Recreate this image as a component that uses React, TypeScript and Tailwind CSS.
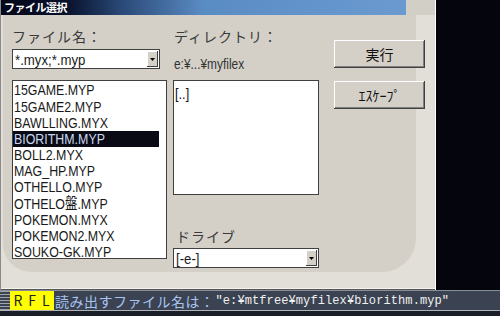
import React from "react";

const files = [
  "15GAME.MYP",
  "15GAME2.MYP",
  "BAWLLING.MYX",
  "BIORITHM.MYP",
  "BOLL2.MYX",
  "MAG_HP.MYP",
  "OTHELLO.MYP",
  "OTHELO盤.MYP",
  "POKEMON.MYX",
  "POKEMON2.MYX",
  "SOUKO-GK.MYP",
];

const jp = { fontFamily: '"Noto Sans CJK JP", "Noto Sans", sans-serif' };
const narrow = { fontFamily: '"Liberation Sans", "Noto Sans CJK JP", sans-serif' };

function DropArrow() {
  return (
    <div className="w-[11px] h-[16px] bg-[#d4d0c8] shadow-[inset_-1px_-1px_#404040,inset_1px_1px_#fff] flex items-center justify-center">
      <svg width="5" height="3" viewBox="0 0 5 3">
        <path d="M0 0h5L2.5 3z" fill="#000" />
      </svg>
    </div>
  );
}

function Combo({ value, w }: { value: string; w: string }) {
  return (
    <div className={`${w} h-[20px] bg-white border border-[#404040] flex items-center justify-between pl-[2px] pr-[1px]`}>
      <span className="inline-block text-[15px] text-[#1a1a1a] leading-none origin-left scale-x-[0.88] whitespace-nowrap" style={narrow}>
        {value}
      </span>
      <DropArrow />
    </div>
  );
}

function Btn({ label }: { label: string }) {
  return (
    <div
      className="w-[91px] h-[28px] bg-[#d4d0c8] shadow-[inset_-1px_-1px_#404040,inset_1px_1px_#fff,inset_-2px_-2px_#808080] flex items-center justify-center text-[14px] text-[#111]"
      style={jp}
    >
      {label}
    </div>
  );
}

export default function App() {
  return (
    <div className="w-[500px] h-[316px] bg-[#05050d] flex flex-col overflow-hidden">
      <div className="w-[436px] h-[290px] bg-[#e2dfd8] border-l border-[#8a8a8a] border-r border-r-white flex flex-col shrink-0">
        {/* title bar */}
        <div className="h-[15px] flex shrink-0">
          <div className="w-[405px] h-full bg-[linear-gradient(90deg,#05081a_0%,#07102a_16%,#2a4a78_30%,#5a8cc4_50%,#6a9ad0_100%)] flex items-center pl-[3px]">
            <span className="text-[11px] font-bold text-white leading-none tracking-[-0.5px]" style={jp}>
              ファイル選択
            </span>
          </div>
          <div className="flex-1 bg-[#d2cfc7]" />
        </div>
        {/* inner panel */}
        <div className="flex flex-1">
          <div className="ml-[2px] w-[413px] h-[257px] bg-[#d4d0c8] rounded-br-[34px] rounded-bl-[28px] flex pl-[9px] pt-[9px]">
            <div className="w-[155px] flex flex-col">
              <div className="h-[24px] text-[14px] text-[#3a3a3a] tracking-[1px] leading-[24px]" style={jp}>
                ファイル名：
              </div>
              <div className="mt-[1px]">
                <Combo value="*.myx;*.myp" w="w-[148px]" />
              </div>
              <div className="mt-[11px] w-[155px] h-[179px] bg-white border border-[#404040] pt-[1px]">
                {files.map((f) => (
                  <div
                    key={f}
                    className={`h-[16.2px] w-[146px] flex items-center pl-[1px] ${
                      f === "BIORITHM.MYP" ? "bg-[#0a0a14] text-[#c8d8f0]" : "text-[#1a1a1a]"
                    }`}
                  >
                    <span className="inline-block text-[15.5px] leading-none origin-left scale-x-[0.8] whitespace-nowrap" style={narrow}>
                      {f}
                    </span>
                  </div>
                ))}
              </div>
            </div>
            <div className="ml-[6px] w-[146px] flex flex-col">
              <div className="h-[24px] text-[14px] text-[#3a3a3a] tracking-[1px] leading-[24px] pl-[1px]" style={jp}>
                ディレクトリ：
              </div>
              <div className="h-[22px] mt-[1px] flex items-end pl-[1px]">
                <span className="inline-block text-[14px] text-[#333] leading-none origin-left scale-x-[0.85] whitespace-nowrap" style={narrow}>
                  e:¥...¥myfilex
                </span>
              </div>
              <div className="mt-[9px] w-[146px] h-[115px] bg-white border border-[#404040] pl-[1px]">
                <span className="text-[15px] text-[#111] leading-none origin-left scale-x-[0.85] inline-block" style={narrow}>
                  [..]
                </span>
              </div>
              <div className="mt-[31px] h-[21px] text-[14px] text-[#3a3a3a] tracking-[1px] pl-[3px] leading-[21px]" style={jp}>
                ドライブ
              </div>
              <div className="mt-[1px]">
                <Combo value="[-e-]" w="w-[146px]" />
              </div>
            </div>
            <div className="ml-[15px] pt-[16px] flex flex-col gap-[13px]">
              <Btn label="実行" />
              <Btn label="ｴｽｹｰﾌﾟ" />
            </div>
          </div>
        </div>
        <div className="h-[2px] bg-[#f4f2ee] border-b border-[#555]" />
      </div>
      {/* status bar */}
      <div className="h-[26px] w-[500px] flex flex-col shrink-0">
        <div className="h-[1px] bg-[#8a8e96]" />
        <div className="h-[19px] bg-[#3b4352] flex items-center">
          <div className="w-[10px] h-full bg-[repeating-linear-gradient(180deg,#a0a4ac_0px,#a0a4ac_1px,#3b4352_1px,#3b4352_3px)]" />
          <div className="w-[44px] h-full bg-[#ffff00] flex items-center justify-center text-[14px] tracking-[6px] text-[#222] pl-[5px]" style={jp}>
            RFL
          </div>
          <span className="ml-[1px] text-[14px] text-[#a8c4f0] tracking-[0.5px] leading-none whitespace-nowrap" style={jp}>
            読み出すファイル名は：
          </span>
          <span
            className="ml-[1px] text-[12px] text-[#f0f0f0] leading-none whitespace-nowrap tracking-[0.1px]"
            style={{ fontFamily: '"Liberation Mono", "Noto Sans CJK JP", monospace' }}
          >
            "e:¥mtfree¥myfilex¥biorithm.myp"
          </span>
        </div>
        <div className="h-[1px] bg-[#b0b4bc]" />
        <div className="flex-1 bg-[#1a1e26]" />
      </div>
    </div>
  );
}
